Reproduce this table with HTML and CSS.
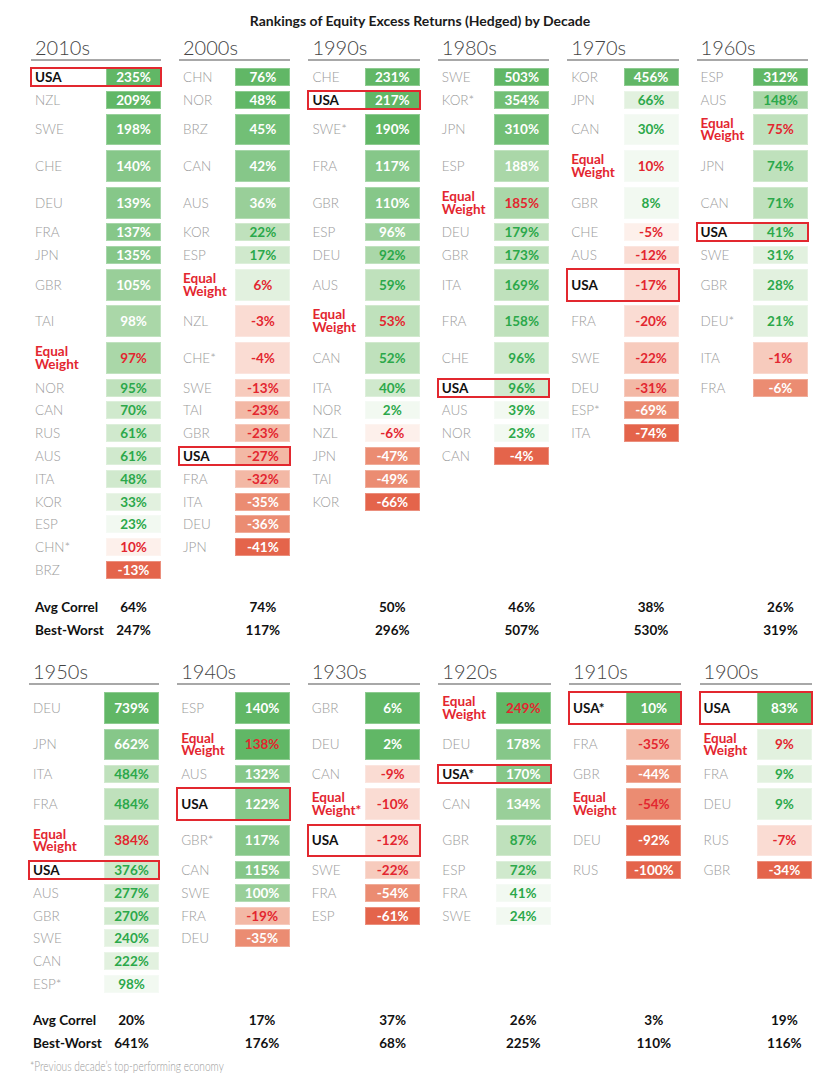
FILE: index.html
```
<!DOCTYPE html>
<html lang="en">
<head>
<meta charset="utf-8">
<title>Rankings of Equity Excess Returns (Hedged) by Decade</title>
<link rel="stylesheet" href="styles.css">
</head>
<body>
<main class="chart">
  <h1 class="title">Rankings of Equity Excess Returns (Hedged) by Decade</h1>

  <section class="sec sec-top">
    <div class="grid">
      <div class="col c1">
        <div class="dec">2010s</div>
        <div class="cell usa hl"><span class="lab">USA</span><span class="val g1">235%</span></div>
        <div class="cell"><span class="lab">NZL</span><span class="val g1">209%</span></div>
        <div class="cell"><span class="lab">SWE</span><span class="val g2">198%</span></div>
        <div class="cell"><span class="lab">CHE</span><span class="val g3">140%</span></div>
        <div class="cell"><span class="lab">DEU</span><span class="val g3">139%</span></div>
        <div class="cell"><span class="lab">FRA</span><span class="val g3">137%</span></div>
        <div class="cell"><span class="lab">JPN</span><span class="val g3">135%</span></div>
        <div class="cell"><span class="lab">GBR</span><span class="val g4">105%</span></div>
        <div class="cell"><span class="lab">TAI</span><span class="val g5">98%</span></div>
        <div class="cell ew"><span class="lab"><span class="ln">Equal</span><span class="ln">Weight</span></span><span class="val g5">97%</span></div>
        <div class="cell"><span class="lab">NOR</span><span class="val g6 gt">95%</span></div>
        <div class="cell"><span class="lab">CAN</span><span class="val g7 gt">70%</span></div>
        <div class="cell"><span class="lab">RUS</span><span class="val g7 gt">61%</span></div>
        <div class="cell"><span class="lab">AUS</span><span class="val g7 gt">61%</span></div>
        <div class="cell"><span class="lab">ITA</span><span class="val g7 gt">48%</span></div>
        <div class="cell"><span class="lab">KOR</span><span class="val g8 gt">33%</span></div>
        <div class="cell"><span class="lab">ESP</span><span class="val g9 gt">23%</span></div>
        <div class="cell"><span class="lab">CHN*</span><span class="val r1 rt">10%</span></div>
        <div class="cell"><span class="lab">BRZ</span><span class="val r6">-13%</span></div>
      </div>
      <div class="col c2">
        <div class="dec">2000s</div>
        <div class="cell"><span class="lab">CHN</span><span class="val g1">76%</span></div>
        <div class="cell"><span class="lab">NOR</span><span class="val g1">48%</span></div>
        <div class="cell"><span class="lab">BRZ</span><span class="val g2">45%</span></div>
        <div class="cell"><span class="lab">CAN</span><span class="val g3">42%</span></div>
        <div class="cell"><span class="lab">AUS</span><span class="val g4">36%</span></div>
        <div class="cell"><span class="lab">KOR</span><span class="val g6 gt">22%</span></div>
        <div class="cell"><span class="lab">ESP</span><span class="val g7 gt">17%</span></div>
        <div class="cell ew"><span class="lab"><span class="ln">Equal</span><span class="ln">Weight</span></span><span class="val g8">6%</span></div>
        <div class="cell"><span class="lab">NZL</span><span class="val r2 rt">-3%</span></div>
        <div class="cell"><span class="lab">CHE*</span><span class="val r2 rt">-4%</span></div>
        <div class="cell"><span class="lab">SWE</span><span class="val r3 rt">-13%</span></div>
        <div class="cell"><span class="lab">TAI</span><span class="val r4 rt">-23%</span></div>
        <div class="cell"><span class="lab">GBR</span><span class="val r4 rt">-23%</span></div>
        <div class="cell usa hl"><span class="lab">USA</span><span class="val r4 rt">-27%</span></div>
        <div class="cell"><span class="lab">FRA</span><span class="val r4 rt">-32%</span></div>
        <div class="cell"><span class="lab">ITA</span><span class="val r5">-35%</span></div>
        <div class="cell"><span class="lab">DEU</span><span class="val r5">-36%</span></div>
        <div class="cell"><span class="lab">JPN</span><span class="val r6">-41%</span></div>
      </div>
      <div class="col c3">
        <div class="dec">1990s</div>
        <div class="cell"><span class="lab">CHE</span><span class="val g1">231%</span></div>
        <div class="cell usa hl"><span class="lab">USA</span><span class="val g1">217%</span></div>
        <div class="cell"><span class="lab">SWE*</span><span class="val g1">190%</span></div>
        <div class="cell"><span class="lab">FRA</span><span class="val g3">117%</span></div>
        <div class="cell"><span class="lab">GBR</span><span class="val g3">110%</span></div>
        <div class="cell"><span class="lab">ESP</span><span class="val g4">96%</span></div>
        <div class="cell"><span class="lab">DEU</span><span class="val g5 gt">92%</span></div>
        <div class="cell"><span class="lab">AUS</span><span class="val g6 gt">59%</span></div>
        <div class="cell ew"><span class="lab"><span class="ln">Equal</span><span class="ln">Weight</span></span><span class="val g6">53%</span></div>
        <div class="cell"><span class="lab">CAN</span><span class="val g6 gt">52%</span></div>
        <div class="cell"><span class="lab">ITA</span><span class="val g7 gt">40%</span></div>
        <div class="cell"><span class="lab">NOR</span><span class="val g9 gt">2%</span></div>
        <div class="cell"><span class="lab">NZL</span><span class="val r1 rt">-6%</span></div>
        <div class="cell"><span class="lab">JPN</span><span class="val r5">-47%</span></div>
        <div class="cell"><span class="lab">TAI</span><span class="val r5">-49%</span></div>
        <div class="cell"><span class="lab">KOR</span><span class="val r6">-66%</span></div>
      </div>
      <div class="col c4">
        <div class="dec">1980s</div>
        <div class="cell"><span class="lab">SWE</span><span class="val g1">503%</span></div>
        <div class="cell"><span class="lab">KOR*</span><span class="val g2">354%</span></div>
        <div class="cell"><span class="lab">JPN</span><span class="val g2">310%</span></div>
        <div class="cell"><span class="lab">ESP</span><span class="val g5">188%</span></div>
        <div class="cell ew"><span class="lab"><span class="ln">Equal</span><span class="ln">Weight</span></span><span class="val g5">185%</span></div>
        <div class="cell"><span class="lab">DEU</span><span class="val g6 gt">179%</span></div>
        <div class="cell"><span class="lab">GBR</span><span class="val g6 gt">173%</span></div>
        <div class="cell"><span class="lab">ITA</span><span class="val g6 gt">169%</span></div>
        <div class="cell"><span class="lab">FRA</span><span class="val g6 gt">158%</span></div>
        <div class="cell"><span class="lab">CHE</span><span class="val g7 gt">96%</span></div>
        <div class="cell usa hl"><span class="lab">USA</span><span class="val g7 gt">96%</span></div>
        <div class="cell"><span class="lab">AUS</span><span class="val g9 gt">39%</span></div>
        <div class="cell"><span class="lab">NOR</span><span class="val g9 gt">23%</span></div>
        <div class="cell"><span class="lab">CAN</span><span class="val r6">-4%</span></div>
      </div>
      <div class="col c5">
        <div class="dec">1970s</div>
        <div class="cell"><span class="lab">KOR</span><span class="val g1">456%</span></div>
        <div class="cell"><span class="lab">JPN</span><span class="val g8 gt">66%</span></div>
        <div class="cell"><span class="lab">CAN</span><span class="val g9 gt">30%</span></div>
        <div class="cell ew"><span class="lab"><span class="ln">Equal</span><span class="ln">Weight</span></span><span class="val g9">10%</span></div>
        <div class="cell"><span class="lab">GBR</span><span class="val g9 gt">8%</span></div>
        <div class="cell"><span class="lab">CHE</span><span class="val r1 rt">-5%</span></div>
        <div class="cell"><span class="lab">AUS</span><span class="val r2 rt">-12%</span></div>
        <div class="cell usa hl"><span class="lab">USA</span><span class="val r2 rt">-17%</span></div>
        <div class="cell"><span class="lab">FRA</span><span class="val r2 rt">-20%</span></div>
        <div class="cell"><span class="lab">SWE</span><span class="val r3 rt">-22%</span></div>
        <div class="cell"><span class="lab">DEU</span><span class="val r4 rt">-31%</span></div>
        <div class="cell"><span class="lab">ESP*</span><span class="val r5">-69%</span></div>
        <div class="cell"><span class="lab">ITA</span><span class="val r6">-74%</span></div>
      </div>
      <div class="col c6">
        <div class="dec">1960s</div>
        <div class="cell"><span class="lab">ESP</span><span class="val g1">312%</span></div>
        <div class="cell"><span class="lab">AUS</span><span class="val g5 gt">148%</span></div>
        <div class="cell ew"><span class="lab"><span class="ln">Equal</span><span class="ln">Weight</span></span><span class="val g6">75%</span></div>
        <div class="cell"><span class="lab">JPN</span><span class="val g6 gt">74%</span></div>
        <div class="cell"><span class="lab">CAN</span><span class="val g6 gt">71%</span></div>
        <div class="cell usa hl"><span class="lab">USA</span><span class="val g7 gt">41%</span></div>
        <div class="cell"><span class="lab">SWE</span><span class="val g8 gt">31%</span></div>
        <div class="cell"><span class="lab">GBR</span><span class="val g8 gt">28%</span></div>
        <div class="cell"><span class="lab">DEU*</span><span class="val g8 gt">21%</span></div>
        <div class="cell"><span class="lab">ITA</span><span class="val r3 rt">-1%</span></div>
        <div class="cell"><span class="lab">FRA</span><span class="val r5">-6%</span></div>
      </div>
    </div>
    <div class="grid stats">
      <div class="cell st"><span class="lab">Avg Correl</span><span class="val">64%</span></div>
      <div class="cell st"><span class="lab"></span><span class="val">74%</span></div>
      <div class="cell st"><span class="lab"></span><span class="val">50%</span></div>
      <div class="cell st"><span class="lab"></span><span class="val">46%</span></div>
      <div class="cell st"><span class="lab"></span><span class="val">38%</span></div>
      <div class="cell st"><span class="lab"></span><span class="val">26%</span></div>
      <div class="cell st"><span class="lab">Best-Worst</span><span class="val">247%</span></div>
      <div class="cell st"><span class="lab"></span><span class="val">117%</span></div>
      <div class="cell st"><span class="lab"></span><span class="val">296%</span></div>
      <div class="cell st"><span class="lab"></span><span class="val">507%</span></div>
      <div class="cell st"><span class="lab"></span><span class="val">530%</span></div>
      <div class="cell st"><span class="lab"></span><span class="val">319%</span></div>
    </div>
  </section>

  <section class="sec sec-bottom">
    <div class="grid">
      <div class="col c1">
        <div class="dec">1950s</div>
        <div class="cell"><span class="lab">DEU</span><span class="val g1">739%</span></div>
        <div class="cell"><span class="lab">JPN</span><span class="val g3">662%</span></div>
        <div class="cell"><span class="lab">ITA</span><span class="val g6 gt">484%</span></div>
        <div class="cell"><span class="lab">FRA</span><span class="val g6 gt">484%</span></div>
        <div class="cell ew"><span class="lab"><span class="ln">Equal</span><span class="ln">Weight</span></span><span class="val g6">384%</span></div>
        <div class="cell usa hl"><span class="lab">USA</span><span class="val g7 gt">376%</span></div>
        <div class="cell"><span class="lab">AUS</span><span class="val g7 gt">277%</span></div>
        <div class="cell"><span class="lab">GBR</span><span class="val g7 gt">270%</span></div>
        <div class="cell"><span class="lab">SWE</span><span class="val g8 gt">240%</span></div>
        <div class="cell"><span class="lab">CAN</span><span class="val g8 gt">222%</span></div>
        <div class="cell"><span class="lab">ESP*</span><span class="val g9 gt">98%</span></div>
      </div>
      <div class="col c2">
        <div class="dec">1940s</div>
        <div class="cell"><span class="lab">ESP</span><span class="val g1">140%</span></div>
        <div class="cell ew"><span class="lab"><span class="ln">Equal</span><span class="ln">Weight</span></span><span class="val g1">138%</span></div>
        <div class="cell"><span class="lab">AUS</span><span class="val g3">132%</span></div>
        <div class="cell usa hl"><span class="lab">USA</span><span class="val g3">122%</span></div>
        <div class="cell"><span class="lab">GBR*</span><span class="val g3">117%</span></div>
        <div class="cell"><span class="lab">CAN</span><span class="val g3">115%</span></div>
        <div class="cell"><span class="lab">SWE</span><span class="val g4">100%</span></div>
        <div class="cell"><span class="lab">FRA</span><span class="val r4 rt">-19%</span></div>
        <div class="cell"><span class="lab">DEU</span><span class="val r5">-35%</span></div>
      </div>
      <div class="col c3">
        <div class="dec">1930s</div>
        <div class="cell"><span class="lab">GBR</span><span class="val g1">6%</span></div>
        <div class="cell"><span class="lab">DEU</span><span class="val g1">2%</span></div>
        <div class="cell"><span class="lab">CAN</span><span class="val r2 rt">-9%</span></div>
        <div class="cell ew"><span class="lab"><span class="ln">Equal</span><span class="ln">Weight*</span></span><span class="val r2">-10%</span></div>
        <div class="cell usa hl"><span class="lab">USA</span><span class="val r2 rt">-12%</span></div>
        <div class="cell"><span class="lab">SWE</span><span class="val r3 rt">-22%</span></div>
        <div class="cell"><span class="lab">FRA</span><span class="val r5">-54%</span></div>
        <div class="cell"><span class="lab">ESP</span><span class="val r6">-61%</span></div>
      </div>
      <div class="col c4">
        <div class="dec">1920s</div>
        <div class="cell ew"><span class="lab"><span class="ln">Equal</span><span class="ln">Weight</span></span><span class="val g1">249%</span></div>
        <div class="cell"><span class="lab">DEU</span><span class="val g3">178%</span></div>
        <div class="cell usa hl"><span class="lab">USA*</span><span class="val g3">170%</span></div>
        <div class="cell"><span class="lab">CAN</span><span class="val g4">134%</span></div>
        <div class="cell"><span class="lab">GBR</span><span class="val g6 gt">87%</span></div>
        <div class="cell"><span class="lab">ESP</span><span class="val g7 gt">72%</span></div>
        <div class="cell"><span class="lab">FRA</span><span class="val g9 gt">41%</span></div>
        <div class="cell"><span class="lab">SWE</span><span class="val g9 gt">24%</span></div>
      </div>
      <div class="col c5">
        <div class="dec">1910s</div>
        <div class="cell usa hl"><span class="lab">USA*</span><span class="val g1">10%</span></div>
        <div class="cell"><span class="lab">FRA</span><span class="val r4 rt">-35%</span></div>
        <div class="cell"><span class="lab">GBR</span><span class="val r5">-44%</span></div>
        <div class="cell ew"><span class="lab"><span class="ln">Equal</span><span class="ln">Weight</span></span><span class="val r5">-54%</span></div>
        <div class="cell"><span class="lab">DEU</span><span class="val r6">-92%</span></div>
        <div class="cell"><span class="lab">RUS</span><span class="val r6">-100%</span></div>
      </div>
      <div class="col c6">
        <div class="dec">1900s</div>
        <div class="cell usa hl"><span class="lab">USA</span><span class="val g1">83%</span></div>
        <div class="cell ew"><span class="lab"><span class="ln">Equal</span><span class="ln">Weight</span></span><span class="val g8">9%</span></div>
        <div class="cell"><span class="lab">FRA</span><span class="val g8 gt">9%</span></div>
        <div class="cell"><span class="lab">DEU</span><span class="val g8 gt">9%</span></div>
        <div class="cell"><span class="lab">RUS</span><span class="val r2 rt">-7%</span></div>
        <div class="cell"><span class="lab">GBR</span><span class="val r6">-34%</span></div>
      </div>
    </div>
    <div class="grid stats">
      <div class="cell st"><span class="lab">Avg Correl</span><span class="val">20%</span></div>
      <div class="cell st"><span class="lab"></span><span class="val">17%</span></div>
      <div class="cell st"><span class="lab"></span><span class="val">37%</span></div>
      <div class="cell st"><span class="lab"></span><span class="val">26%</span></div>
      <div class="cell st"><span class="lab"></span><span class="val">3%</span></div>
      <div class="cell st"><span class="lab"></span><span class="val">19%</span></div>
      <div class="cell st"><span class="lab">Best-Worst</span><span class="val">641%</span></div>
      <div class="cell st"><span class="lab"></span><span class="val">176%</span></div>
      <div class="cell st"><span class="lab"></span><span class="val">68%</span></div>
      <div class="cell st"><span class="lab"></span><span class="val">225%</span></div>
      <div class="cell st"><span class="lab"></span><span class="val">110%</span></div>
      <div class="cell st"><span class="lab"></span><span class="val">116%</span></div>
    </div>
  </section>

  <p class="note"><span class="note-text">*Previous decade’s top-performing economy</span></p>
</main>
</body>
</html>
```

FILE: styles.css
```
* { box-sizing: border-box; }

body {
  margin: 0;
  background: #ffffff;
  font-family: Lato, "Open Sans", "DejaVu Sans", sans-serif;
  color: #1a1a1a;
}

.chart {
  width: 840px;
}

.title {
  margin: 0 0 4px;
  padding-top: 11px;
  font-size: 14px;
  line-height: 20px;
  font-weight: 700;
  text-align: center;
  color: #1a1a1a;
}

.grid {
  display: grid;
  grid-template-columns: 130px repeat(5, 111.4px);
  column-gap: 18px;
  row-gap: 4.8px;
  grid-auto-flow: row dense;
  margin-left: 31px;
}

.sec-bottom { margin-top: 20px; }
.sec-bottom .grid {
  margin-left: 29px;
  grid-template-columns: 130px repeat(5, 112.4px);
  column-gap: 18.2px;
}

.col { display: contents; }
.c1 > * { grid-column: 1; }
.c2 > * { grid-column: 2; }
.c3 > * { grid-column: 3; }
.c4 > * { grid-column: 4; }
.c5 > * { grid-column: 5; }
.c6 > * { grid-column: 6; }

.dec {
  font-size: 20px;
  font-weight: 300;
  line-height: 24px;
  color: #444;
  padding-left: 4px;
  border-bottom: 2px solid #a8a8a8;
  margin-bottom: 2.2px;
}

.cell {
  display: flex;
  min-height: 18px;
}

.lab {
  flex: 1;
  display: flex;
  align-items: center;
  padding-left: 4px;
  font-size: 13.5px;
  font-weight: 300;
  line-height: 14px;
  color: #9b9b9b;
  white-space: nowrap;
}

.val {
  width: 55px;
  flex: none;
  display: flex;
  align-items: center;
  justify-content: center;
  font-size: 13.5px;
  font-weight: 700;
  line-height: 14px;
  color: #ffffff;
  box-shadow: inset 0 0 0 1px rgba(255, 255, 255, 0.28);
}

.usa .lab { font-weight: 700; color: #111; }

.hl {
  outline: 2px solid #e2282f;
  outline-offset: -1px;
}

.ew .lab {
  flex-direction: column;
  align-items: flex-start;
  justify-content: center;
  color: #e3262f;
  font-weight: 700;
  padding-top: 3px;
  padding-bottom: 3px;
}
.ew .ln {
  display: block;
  height: 12.9px;
  line-height: 12.9px;
  font-size: 13.5px;
}
.ew .val { color: #e3262f; }

.gt { color: #2ba84a; }
.rt { color: #e3262f; }

.g1 { background: #61b766; }
.g2 { background: #72bf76; }
.g3 { background: #86c789; }
.g4 { background: #99cf99; }
.g5 { background: #aad7a8; }
.g6 { background: #bfe1bc; }
.g7 { background: #d0e9cd; }
.g8 { background: #e2f1df; }
.g9 { background: #f2f9f1; }
.r1 { background: #fdf0eb; }
.r2 { background: #fadcd3; }
.r3 { background: #f7cbbd; }
.r4 { background: #f3b8a5; }
.r5 { background: #eb8c72; }
.r6 { background: #e4644b; }

.stats {
  margin-top: 18.7px;
  row-gap: 5.3px;
}
.sec-bottom .stats { margin-top: 18px; row-gap: 5px; }

.st .lab { font-weight: 700; color: #111; }
.st .val { color: #111; box-shadow: none; }

.note {
  margin: 7px 0 0 30px;
  font-size: 13px;
  line-height: 14px;
  font-weight: 300;
  color: #999;
}
.note-text {
  display: inline-block;
  transform: scaleX(0.78);
  transform-origin: left center;
  white-space: nowrap;
}
```
